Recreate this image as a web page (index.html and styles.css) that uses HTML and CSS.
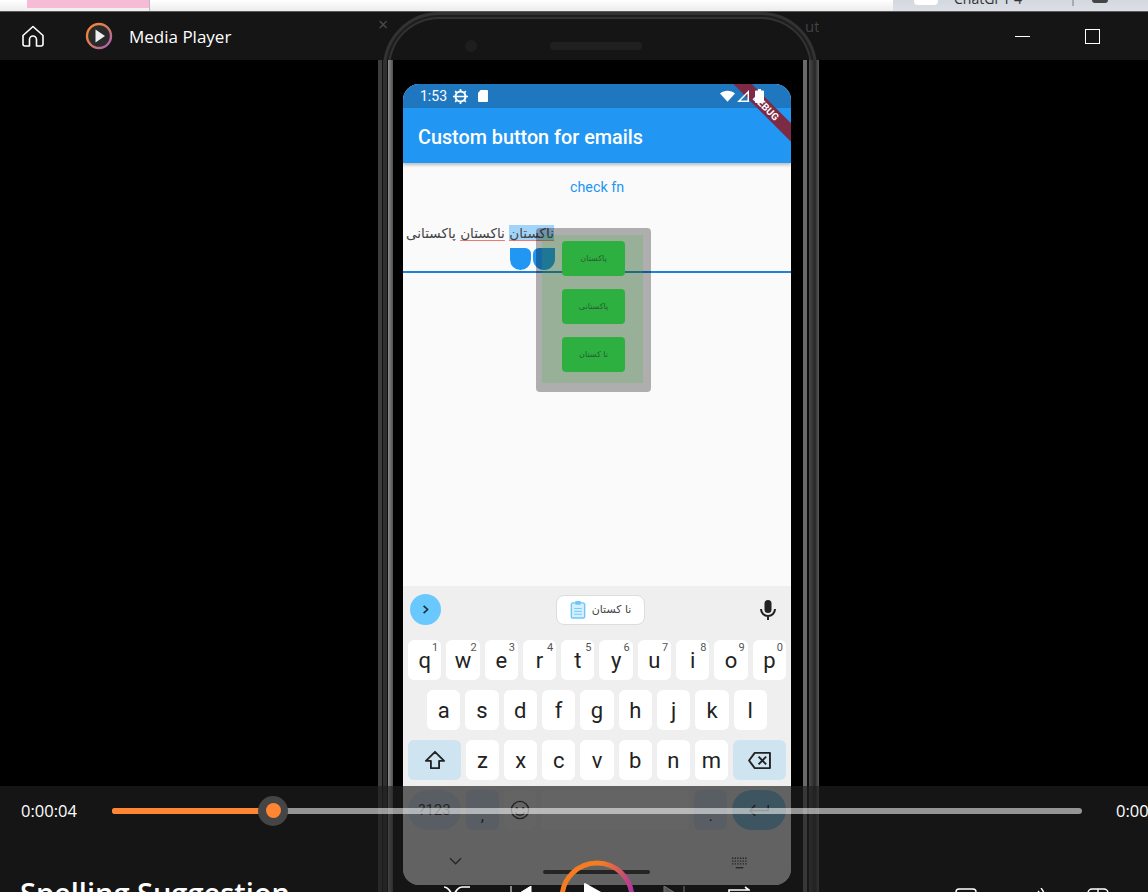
FILE: index.html
```html
<!DOCTYPE html>
<html lang="en">
<head>
  <meta charset="UTF-8"/>
  <title>Media Player</title>
  <link rel="stylesheet" href="styles.css">
</head>
<body>
<!-- Strip of the window behind the player -->
<div class="behind">
  <div class="behind-pink"></div>
  <div class="behind-tabs">
    <span class="behind-chip"></span>
    <span class="behind-text">ChatGPT 4</span>
    <span class="behind-sep"></span>
    <span class="behind-dot"></span>
  </div>
</div>

<main class="player">
  <!-- Video frame: a recorded phone, bars lie over it -->
  <div class="video">
    <span class="ghost ghost-x">×</span>
    <span class="ghost ghost-ut">utl</span>
    <div class="phone">
      <div class="camera"></div>
      <div class="speaker"></div>

      <div class="screen">
        <div class="status">
          <span class="clock">1:53</span>
          <svg class="status-icon" viewBox="0 0 16 16" width="15" height="15"><circle cx="8" cy="8" r="5.300" fill="none" stroke="#fff" stroke-width="2.200"/><path d="M3 8h10" stroke="#fff" stroke-width="1.800"/><path d="M8 0v3M8 13v3M0 8h3M13 8h3M2.300 2.300l2 2M11.700 11.700l2 2M13.700 2.300l-2 2M4.300 11.700l-2 2" stroke="#fff" stroke-width="1.800"/></svg>
          <svg class="status-icon status-sd" viewBox="0 0 12 14" width="12" height="14"><path d="M3.500 1H10a1 1 0 0 1 1 1v10a1 1 0 0 1-1 1H2a1 1 0 0 1-1-1V4z" fill="#fff"/></svg>
          <span class="status-gap"></span>
          <svg viewBox="0 0 16 12" width="15" height="12"><path d="M0 3.200C4.500-.6 11.500-.6 16 3.200L8 12z" fill="#fff"/></svg>
          <svg viewBox="0 0 12 12" width="12" height="12"><path d="M12 0v12H0zM10.500 3.600 3.600 10.500h6.900z" fill="#fff" fill-rule="evenodd"/></svg>
          <svg class="status-batt" viewBox="0 0 9 14" width="9" height="14"><path d="M3 0h3v1.500h2a1 1 0 0 1 1 1V13a1 1 0 0 1-1 1H1a1 1 0 0 1-1-1V2.500a1 1 0 0 1 1-1h2z" fill="#fff"/></svg>
        </div>
        <div class="appbar">Custom button for emails</div>
        <div class="banner"><span>DEBUG</span></div>

        <div class="page">
          <div class="check">check fn</div>
          <div class="field" dir="rtl"><span class="sel"><span class="typo">ناکستان</span></span> <span class="typo">ناکستان</span> پاکستانی</div>
          <div class="handles">
            <span class="handle handle-a"></span>
            <span class="handle handle-b"></span>
          </div>
          <div class="field-line"></div>
          <!-- Suggestion popup -->
          <div class="popup">
            <div class="popup-inner">
              <div class="suggest" dir="rtl">پاکستان</div>
              <div class="suggest" dir="rtl">پاکستانی</div>
              <div class="suggest" dir="rtl">نا کستان</div>
            </div>
          </div>
        </div>

        <div class="keyboard">
          <div class="kb-top">
            <span class="kb-toggle">
              <svg viewBox="0 0 10 12" width="8" height="11"><path d="M2 1.500 7 6l-5 4.500" fill="none" stroke="#1d2a33" stroke-width="2"/></svg>
            </span>
            <span class="clip">
              <svg viewBox="0 0 16 20" width="16" height="19"><rect x="1" y="3" width="14" height="16" rx="2" fill="#d5efff" stroke="#6cc8fa" stroke-width="1.500"/><rect x="5" y="1" width="6" height="4" rx="1" fill="#6cc8fa"/><path d="M4 9h8M4 12h8M4 15h8" stroke="#6cc8fa"/></svg>
              <span dir="rtl">نا کستان</span>
            </span>
            <svg class="mic" viewBox="0 0 16 20" width="16" height="20"><rect x="4.500" y="0" width="7" height="13" rx="3.500" fill="#222"/><path d="M1 9a7 7 0 0 0 14 0M8 16v4" fill="none" stroke="#222" stroke-width="2"/></svg>
          </div>
          <div class="kb-row">
            <span class="key"><sup>1</sup>q</span><span class="key"><sup>2</sup>w</span><span class="key"><sup>3</sup>e</span><span class="key"><sup>4</sup>r</span><span class="key"><sup>5</sup>t</span><span class="key"><sup>6</sup>y</span><span class="key"><sup>7</sup>u</span><span class="key"><sup>8</sup>i</span><span class="key"><sup>9</sup>o</span><span class="key"><sup>0</sup>p</span>
          </div>
          <div class="kb-row kb-row-mid">
            <span class="key">a</span><span class="key">s</span><span class="key">d</span><span class="key">f</span><span class="key">g</span><span class="key">h</span><span class="key">j</span><span class="key">k</span><span class="key">l</span>
          </div>
          <div class="kb-row">
            <span class="key key-mod">
              <svg viewBox="0 0 24 22" width="22" height="20"><path d="M12 2 2 12h5.500v8h9v-8H22z" fill="none" stroke="#222" stroke-width="2" stroke-linejoin="round"/></svg>
            </span>
            <span class="key">z</span><span class="key">x</span><span class="key">c</span><span class="key">v</span><span class="key">b</span><span class="key">n</span><span class="key">m</span>
            <span class="key key-mod">
              <svg viewBox="0 0 26 20" width="25" height="19"><path d="M8 2h16v16H8l-6-8z" fill="none" stroke="#222" stroke-width="2" stroke-linejoin="round"/><path d="m12 6 8 8m0-8-8 8" stroke="#222" stroke-width="2"/></svg>
            </span>
          </div>
          <div class="kb-row">
            <span class="key key-mod key-pill key-sym">?123</span>
            <span class="key key-soft key-punct">,</span>
            <span class="key key-plain">
              <svg viewBox="0 0 22 22" width="20" height="20"><circle cx="11" cy="11" r="9.500" fill="none" stroke="#222" stroke-width="1.500"/><circle cx="7.500" cy="9" r="1.300" fill="#222"/><circle cx="14.500" cy="9" r="1.300" fill="#222"/><path d="M6 13.500a5.500 5.500 0 0 0 10 0" fill="none" stroke="#222" stroke-width="1.500"/></svg>
            </span>
            <span class="key key-plain key-space"></span>
            <span class="key key-soft key-punct">.</span>
            <span class="key key-pill key-enter">
              <svg viewBox="0 0 24 16" width="22" height="15"><path d="M22 2v6H3M8 2 2 8l6 6" fill="none" stroke="#222" stroke-width="1.600"/></svg>
            </span>
          </div>
          <div class="kb-nav">
            <svg viewBox="0 0 14 8" width="13" height="8"><path d="m1 1 6 6 6-6" fill="none" stroke="#333" stroke-width="1.400"/></svg>
            <svg viewBox="0 0 18 12" width="17" height="12"><path d="M1 1h16M1 4h16M1 7h16" stroke="#333" stroke-width="1.400" stroke-dasharray="1.500 1.300"/><path d="M5 11h8" stroke="#333" stroke-width="1.400"/></svg>
          </div>
          <div class="home-bar"></div>
        </div>
      </div>
    </div>
    <div class="edge edge-left"></div>
    <div class="edge edge-right"></div>
  </div>

  <header class="titlebar">
    <svg class="home" viewBox="0 0 24 24" width="24" height="24"><path d="M12 2.500 2 11.500v8.500a2 2 0 0 0 2 2h4.500v-6.500a3.500 3.500 0 0 1 7 0V22H20a2 2 0 0 0 2-2v-8.500z" fill="none" stroke="#fff" stroke-width="1.600" stroke-linejoin="round"/></svg>
    <svg class="app-icon" viewBox="0 0 28 28" width="28" height="28">
      <defs>
        <linearGradient id="ring" x1="0" y1="0" x2="1" y2="1"><stop offset="0" stop-color="#f98a2c"/><stop offset="0.5" stop-color="#d77a5e"/><stop offset="1" stop-color="#a45cc6"/></linearGradient>
      </defs>
      <circle cx="14" cy="14" r="12" fill="#2a2a2a" stroke="url(#ring)" stroke-width="2.400"/>
      <path d="M10.500 7.500v13L20 14z" fill="#eee"/>
    </svg>
    <span class="app-name">Media Player</span>
    <span class="spacer"></span>
    <span class="win-min"></span>
    <span class="win-max"></span>
  </header>

  <div class="stage"></div>

  <section class="controls">
    <div class="seek">
      <span class="time">0:00:04</span>
      <div class="track">
        <div class="played"></div>
        <div class="thumb"><span></span></div>
      </div>
      <span class="time time-end">0:00:09</span>
    </div>
    <div class="bottom">
      <span class="video-title">Spelling Suggestion</span>
      <div class="transport">
        <svg class="t-shuffle" viewBox="0 0 28 20" width="28" height="20"><path d="M1 1c8 0 10 18 18 18h8M1 19c8 0 10-18 18-18h8" fill="none" stroke="#fff" stroke-width="1.600"/></svg>
        <svg viewBox="0 0 22 20" width="22" height="20"><path d="M1 0v20M21 0v20L5 10z" fill="#fff" stroke="#fff"/></svg>
        <svg class="play-ring" viewBox="0 0 76 76" width="76" height="76">
          <defs>
            <linearGradient id="play" x1="0" y1="0" x2="1" y2="0.500"><stop offset="0.450" stop-color="#f57c22"/><stop offset="1" stop-color="#a92fa8"/></linearGradient>
          </defs>
          <circle cx="38" cy="38" r="35" fill="none" stroke="url(#play)" stroke-width="5"/>
          <path d="M26 24v32l28-16z" fill="#fff" stroke="#fff" stroke-width="2" stroke-linejoin="round"/>
        </svg>
        <svg class="t-next" viewBox="0 0 22 20" width="22" height="20"><path d="M1 0v20L17 10zM21 0v20" fill="#555" stroke="#777"/></svg>
        <svg viewBox="0 0 22 20" width="22" height="20"><path d="M1 6V4h20l-4-3M21 14v2H1l4 3" fill="none" stroke="#fff" stroke-width="1.600"/></svg>
      </div>
      <div class="extras">
        <svg viewBox="0 0 22 20" width="22" height="20"><rect x="1" y="1" width="20" height="16" rx="3" fill="none" stroke="#fff" stroke-width="1.400"/></svg>
        <svg viewBox="0 0 20 20" width="20" height="20"><path d="M10 6V20M13 3q3 3 3 7M16 0q4 5 4 10" fill="none" stroke="#fff" stroke-width="1.400"/></svg>
        <svg class="x-grid" viewBox="0 0 22 20" width="22" height="20"><rect x="1" y="1" width="20" height="18" rx="4" fill="none" stroke="#fff" stroke-width="1.400"/><path d="M11 1v18M1 10h20" stroke="#fff" stroke-width="1.400"/></svg>
      </div>
    </div>
  </section>
</main>
</body>
</html>
```

FILE: styles.css
```css
/* General page */
html, body {
    margin: 0;
    height: 892px;
    overflow: hidden;
    background: #000;
}

body {
    display: flex;
    flex-direction: column;
    font-family: "Open Sans", "Noto Sans", sans-serif;
    color: #fff;
}

/* Window behind the player */
.behind {
    flex: 0 0 11px;
    display: flex;
    justify-content: space-between;
    overflow: hidden;
    background: linear-gradient(#ffffff, #ececec);
    border-bottom: 1px solid #5a5a5a;
}

.behind-pink {
    width: 122px;
    height: 11px;
    margin-left: 27px;
    background: linear-gradient(#f6bcd6 8px, #f0f0f0 8px);
    border-right: 1px solid #bbb;
}

.behind-tabs {
    width: 255px;
    display: flex;
    background: linear-gradient(#d3d7df, #dcdfe5);
}

.behind-chip {
    width: 24px;
    height: 5px;
    margin-left: 21px;
    background: #fff;
    border-radius: 0 0 4px 4px;
}

.behind-text {
    width: 118px;
    margin: -11px 0 0 16px;
    font-size: 14px;
    color: #333;
}

.behind-sep {
    width: 2px;
    height: 6px;
    background: #aaa;
}

.behind-dot {
    width: 16px;
    height: 3px;
    margin-left: 18px;
    border-radius: 0 0 8px 8px;
    background: #444;
}

/* Player */
.player {
    position: relative;
    flex: 1;
    display: flex;
    flex-direction: column;
    min-height: 0;
    overflow: hidden;
}

/* Video lies under both bars */
.video {
    position: absolute;
    top: 0;
    bottom: 0;
    left: 378px;
    width: 441px;
    overflow: hidden;
    background: #000;
}

.ghost {
    position: absolute;
    color: #aaa;
}

.ghost-x {
    top: 2px;
    left: 0;
    font-size: 18px;
    line-height: 20px;
}

.ghost-ut {
    top: 3px;
    left: 427px;
    font-size: 15px;
    line-height: 22px;
    color: #888;
}

.edge {
    position: absolute;
    top: 48px;
    bottom: 0;
}

.edge-left {
    left: 0;
    width: 15px;
    background: linear-gradient(90deg, #3d3d3d 0 4px, #111 4px 5px, #303030 5px 9px, #0e0e0e 9px 10px, #8f8f8f 10px, #4e4e4e 15px);
}

.edge-right {
    right: 0;
    width: 16px;
    background: linear-gradient(90deg, #6a6a6a 0 4px, #0c0c0c 4px 6px, #4a4a4a 6px, #262626 12px, #444 14px, #5a5a5a 16px);
}

.phone {
    position: absolute;
    top: 0;
    left: 5px;
    width: 434px;
    height: 1000px;
    box-sizing: border-box;
    border: 3px solid #5c5c5c;
    border-radius: 56px;
    box-shadow: inset 0 0 0 2px #1a1a1a, inset 0 0 0 4px #5c5c5c;
}

.camera {
    position: absolute;
    top: 25px;
    left: 79px;
    width: 12px;
    height: 12px;
    border-radius: 50%;
    background: #1c1c22;
}

.speaker {
    position: absolute;
    top: 27px;
    left: 164px;
    width: 92px;
    height: 8px;
    border-radius: 4px;
    background: #222;
}

/* Recorded phone screen */
.screen {
    position: absolute;
    top: 69px;
    left: 17px;
    width: 388px;
    height: 801px;
    display: flex;
    flex-direction: column;
    overflow: hidden;
    border-radius: 16px;
    background: #fafafa;
    font-family: Roboto, sans-serif;
}

.status {
    position: relative;
    z-index: 2;
    flex: 0 0 24px;
    display: flex;
    align-items: center;
    gap: 2px;
    padding: 0 27px 0 17px;
}

.clock {
    font-size: 14px;
    margin-right: 4px;
}

.status-sd {
    margin-left: 7px;
}

.status-batt {
    margin-left: 4px;
}

.status-gap {
    flex: 1;
}

/* Darker strip behind the status row */
.screen::before {
    content: "";
    position: absolute;
    top: 0;
    left: 0;
    right: 0;
    height: 24px;
    background: #1f78bf;
}

.appbar {
    flex: 0 0 55px;
    display: flex;
    align-items: center;
    box-sizing: border-box;
    padding: 3px 0 0 15px;
    font-size: 19.800px;
    font-weight: 500;
    background: #2196f3;
    box-shadow: 0 2px 3px rgba(0, 0, 0, 0.25);
    position: relative;
}

.banner {
    position: absolute;
    z-index: 1;
    top: 17px;
    right: -25px;
    width: 100px;
    height: 13px;
    transform: rotate(45deg);
    background: #7d2a45;
    text-align: center;
    font-size: 10px;
    line-height: 13px;
    font-weight: 700;
}

.page {
    position: relative;
    flex: 1;
    color: #333;
}

.check {
    padding: 16px 0 0 167px;
    font-size: 14.300px;
    line-height: 17px;
    color: #2196f3;
}

.field {
    position: absolute;
    top: 58px;
    left: 4px;
    width: 147px;
    font-family: "DejaVu Sans", sans-serif;
    font-size: 13.600px;
    line-height: 24px;
    white-space: nowrap;
    color: #444;
}

.sel {
    background: #a2d3f8;
}

.typo {
    text-decoration: underline #ec7a74 1px;
    text-underline-offset: 2px;
}

.handles {
    position: absolute;
    top: 85px;
    left: 107px;
    display: flex;
    gap: 2px;
}

.handle {
    width: 22px;
    height: 22px;
    background: #2196f3;
}

.handle-a { border-radius: 0 6px 11px 11px; width: 21px; }
.handle-b { border-radius: 6px 0 11px 11px; }

.field-line {
    position: absolute;
    top: 108px;
    left: 0;
    right: 0;
    height: 2px;
    background: #1f82d4;
}

.popup {
    position: absolute;
    top: 65px;
    left: 133px;
    width: 115px;
    height: 164px;
    box-sizing: border-box;
    padding: 7px 8px 9px 6px;
    border-radius: 4px;
    background: rgba(0, 0, 0, 0.3);
}

.popup-inner {
    height: 100%;
    box-sizing: border-box;
    padding: 6px 18px 0 20px;
    display: flex;
    flex-direction: column;
    gap: 13px;
    background: rgba(60, 185, 60, 0.2);
}

.suggest {
    height: 35px;
    display: flex;
    align-items: center;
    justify-content: center;
    border-radius: 4px;
    background: #2db040;
    font-family: "DejaVu Sans", sans-serif;
    font-size: 8px;
    color: #2b5a33;
}

/* Keyboard */
.keyboard {
    position: relative;
    flex: 0 0 299px;
    box-sizing: border-box;
    padding: 0 5px;
    background: #efefef;
    color: #222;
}

.kb-top {
    height: 54px;
    box-sizing: border-box;
    display: flex;
    align-items: center;
    justify-content: space-between;
    padding: 0 10px 7px 2px;
}

.kb-toggle {
    width: 31px;
    height: 31px;
    display: flex;
    align-items: center;
    justify-content: center;
    border-radius: 50%;
    background: #69c9ff;
}

.clip {
    width: 89px;
    height: 30px;
    box-sizing: border-box;
    display: flex;
    align-items: center;
    justify-content: center;
    gap: 6px;
    border: 1px solid #ddd;
    border-radius: 8px;
    background: #fff;
    font-family: "DejaVu Sans", sans-serif;
    font-size: 11px;
    color: #444;
}

.kb-row {
    height: 40px;
    display: flex;
    gap: 5px;
    margin-bottom: 10px;
}

.kb-row-mid {
    padding: 0 19px;
}

.key {
    position: relative;
    flex: 1;
    display: flex;
    align-items: center;
    justify-content: center;
    border-radius: 6px;
    background: #fff;
    font-size: 22px;
}

.key sup {
    position: absolute;
    top: 1px;
    right: 3px;
    font-size: 11px;
    line-height: 13px;
    color: #555;
}

.key-mod {
    flex: 0 0 53px;
    background: #cfe4f1;
}

.key-pill {
    border-radius: 20px;
}

.key-sym {
    font-size: 15px;
    color: #333;
}

.key-soft {
    background: #cfe4f1;
}

.key-punct {
    align-items: flex-end;
    padding-bottom: 5px;
    box-sizing: border-box;
    font-size: 17px;
}

.key-plain {
    background: #f5f5f5;
}

.key-space {
    flex: 0 0 148px;
}

.key-enter {
    flex: 0 0 54px;
    background: #7cc5ec;
}

.kb-nav {
    display: flex;
    justify-content: space-between;
    padding: 17px 38px 0 41px;
}

.home-bar {
    position: absolute;
    left: 140px;
    bottom: 11px;
    width: 107px;
    height: 4px;
    border-radius: 2px;
    background: #333;
}

/* Top bar */
.titlebar {
    position: relative;
    flex: 0 0 48px;
    display: flex;
    align-items: center;
    background: rgba(31, 31, 31, 0.68);
}

.home {
    margin-left: 21px;
}

.app-icon {
    margin-left: 40px;
}

.app-name {
    margin-left: 16px;
    font-size: 17px;
}

.spacer {
    flex: 1;
}

.win-min {
    width: 15px;
    height: 1px;
    background: #fff;
}

.win-max {
    width: 13px;
    height: 13px;
    margin: 0 48px 0 55px;
    border: 1px solid #fff;
}

.stage {
    flex: 1;
}

/* Bottom controls, the last row runs past the window edge */
.controls {
    position: relative;
    flex: 0 0 106px;
    min-height: 0;
    background: rgba(31, 31, 31, 0.68);
}

.seek {
    height: 49px;
    display: flex;
    align-items: center;
    padding-left: 21px;
}

.time {
    width: 91px;
    flex: none;
    font-size: 16.500px;
}

.time-end {
    margin-left: 34px;
}

.track {
    position: relative;
    flex: 0 0 970px;
    height: 6px;
    border-radius: 3px;
    background: rgba(255, 255, 255, 0.55);
}

.played {
    width: 150px;
    height: 100%;
    border-radius: 3px 0 0 3px;
    background: #ff8533;
}

.thumb {
    position: absolute;
    top: -12px;
    left: 146px;
    width: 30px;
    height: 30px;
    display: flex;
    align-items: center;
    justify-content: center;
    border-radius: 50%;
    background: #454545;
}

.thumb span {
    width: 15px;
    height: 15px;
    border-radius: 50%;
    background: #ff8533;
}

.bottom {
    position: relative;
    display: flex;
    align-items: flex-start;
    padding: 40px 0 0 20px;
}

.video-title {
    font-size: 29px;
    font-weight: 600;
    line-height: 36px;
    white-space: nowrap;
}

.transport {
    position: absolute;
    top: 51px;
    left: 443px;
    display: flex;
    align-items: flex-start;
}

.t-shuffle {
    margin-right: 39px;
}

.play-ring {
    margin: -26px 28px 0 27px;
}

.t-next {
    margin-right: 43px;
}

.extras {
    position: absolute;
    top: 53px;
    left: 955px;
    display: flex;
    gap: 48px;
}

.x-grid {
    margin-left: -6px;
}
```
